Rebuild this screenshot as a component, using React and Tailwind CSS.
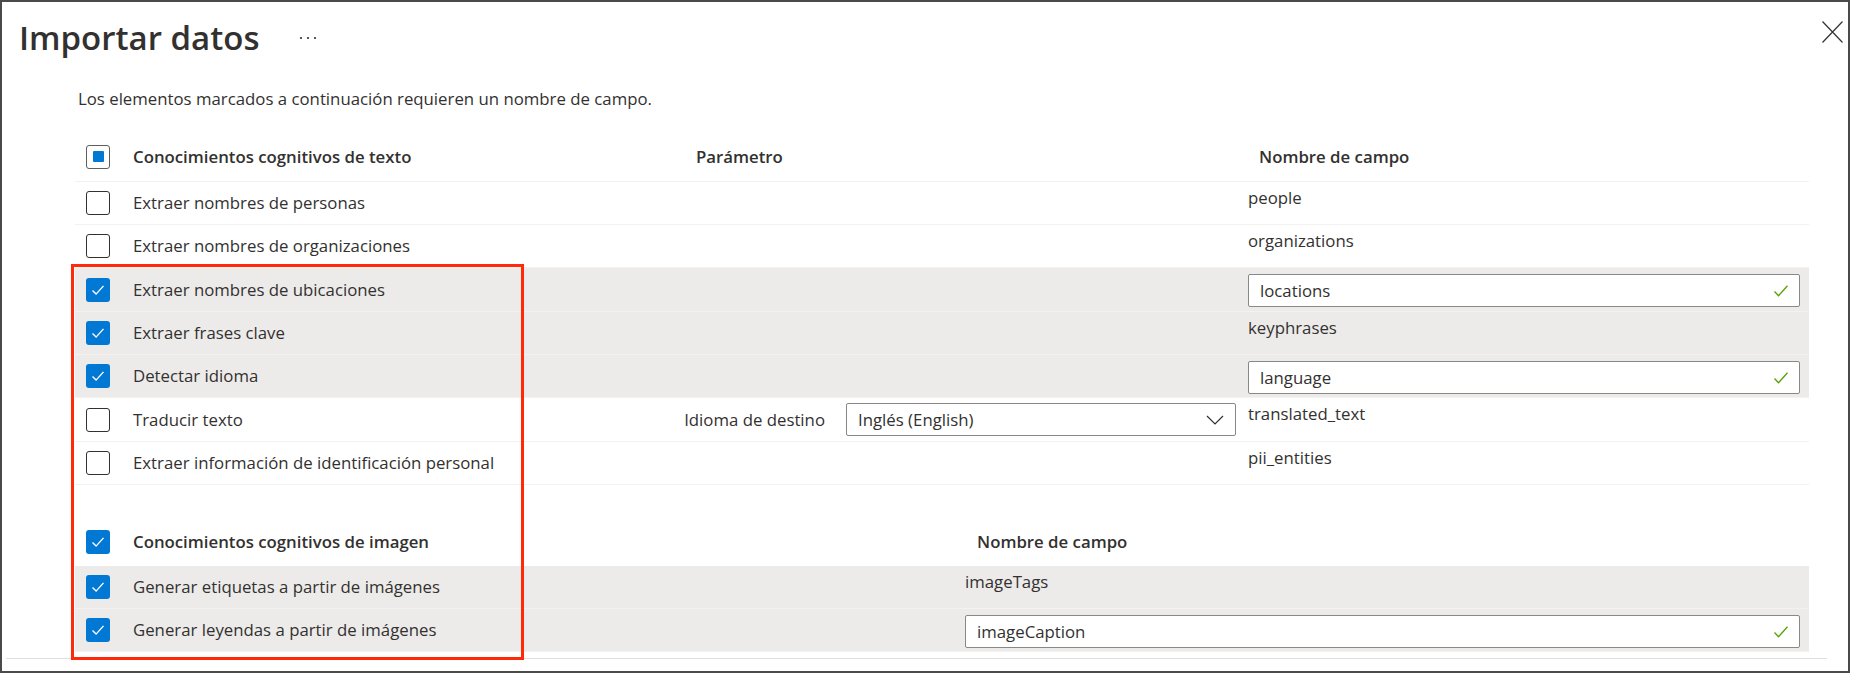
import React from 'react';

const font = { fontFamily: '"Open Sans", "Noto Sans", Arial, sans-serif' };

const textRows = [
  { label: 'Extraer nombres de personas', checked: false, value: 'people', h: 'h-[43px]' },
  { label: 'Extraer nombres de organizaciones', checked: false, value: 'organizations', h: 'h-[43px]' },
  { label: 'Extraer nombres de ubicaciones', checked: true, value: 'locations', input: true, h: 'h-[44px]' },
  { label: 'Extraer frases clave', checked: true, value: 'keyphrases', h: 'h-[43px]' },
  { label: 'Detectar idioma', checked: true, value: 'language', input: true, h: 'h-[43px]' },
  { label: 'Traducir texto', checked: false, value: 'translated_text', param: true, h: 'h-[44px]' },
  { label: 'Extraer información de identificación personal', checked: false, value: 'pii_entities', h: 'h-[43px]' },
];

const imageRows = [
  { label: 'Generar etiquetas a partir de imágenes', checked: true, value: 'imageTags' },
  { label: 'Generar leyendas a partir de imágenes', checked: true, value: 'imageCaption', input: true },
];

function Checkbox({ state }) {
  if (state === 'checked') {
    return (
      <div className="flex h-[24px] w-[24px] shrink-0 items-center justify-center rounded-[3px] bg-[#0078d4]">
        <svg width="24" height="24" viewBox="0 0 24 24" fill="none">
          <path d="M6.5 12.5l3.6 3.6 7.4-8.2" stroke="#fff" strokeWidth="1.4" />
        </svg>
      </div>
    );
  }
  if (state === 'mixed') {
    return (
      <div className="flex h-[24px] w-[24px] shrink-0 items-center justify-center rounded-[3px] border border-[#605e5c] bg-white">
        <div className="h-[11px] w-[11px] rounded-[1px] bg-[#0078d4]" />
      </div>
    );
  }
  return <div className="h-[24px] w-[24px] shrink-0 rounded-[3px] border border-[#323130] bg-white" />;
}

function GreenCheck() {
  return (
    <svg width="16" height="16" viewBox="0 0 16 16" fill="none">
      <path d="M1.5 8.5l4 4.2 9-10" stroke="#57a300" strokeWidth="1.3" />
    </svg>
  );
}

function ValueCell({ row }) {
  if (row.input) {
    return (
      <div className="mt-[6px] flex h-[33px] w-full items-center justify-between rounded-[2px] border border-[#8a8886] bg-white pl-[11px] pr-[10px]">
        <span>{row.value}</span>
        <GreenCheck />
      </div>
    );
  }
  return <div className="pt-[5px] leading-[22px]">{row.value}</div>;
}

function NameCell({ row, width }) {
  return (
    <div className={`flex items-center pl-[11px] ${width}`}>
      <Checkbox state={row.checked ? 'checked' : 'unchecked'} />
      <span className="ml-[23px] whitespace-nowrap">{row.label}</span>
    </div>
  );
}

function TextRow({ row }) {
  return (
    <div className={`flex border-b border-[#f3f2f1] ${row.h} ${row.checked ? 'bg-[#edebe9]' : ''}`}>
      <NameCell row={row} width="w-[609px]" />
      <div className="flex w-[564px] items-center justify-end gap-[21px] pr-[12px]">
        {row.param && (
          <>
            <span className="whitespace-nowrap">Idioma de destino</span>
            <div className="flex h-[33px] w-[390px] items-center justify-between rounded-[2px] border border-[#8a8886] bg-white pl-[11px] pr-[11px]">
              <span>Inglés (English)</span>
              <svg width="18" height="10" viewBox="0 0 18 10" fill="none">
                <path d="M1 1l8 8 8-8" stroke="#323130" strokeWidth="1.2" />
              </svg>
            </div>
          </>
        )}
      </div>
      <div className="flex flex-1 items-start pr-[9px]">
        <ValueCell row={row} />
      </div>
    </div>
  );
}

function ImageRow({ row }) {
  return (
    <div className="flex h-[43px] border-b border-[#f3f2f1] bg-[#edebe9]">
      <NameCell row={row} width="w-[890px]" />
      <div className="flex flex-1 items-start pr-[9px]">
        <ValueCell row={row} />
      </div>
    </div>
  );
}

export default function App() {
  return (
    <div
      className="relative flex h-screen w-full flex-col overflow-hidden border-2 border-[#4a4a4a] bg-white text-[16.8px] text-[#323130]"
      style={font}
    >
      <div className="flex items-start justify-between pl-[17px] pr-[5px] pt-[14px]">
        <div className="flex items-center">
          <h1 className="text-[33px] font-semibold leading-[44px]">Importar datos</h1>
          <svg className="ml-[40px]" width="18" height="4" viewBox="0 0 18 4" fill="#323130">
            <circle cx="2" cy="2" r="1.1" />
            <circle cx="9" cy="2" r="1.1" />
            <circle cx="16" cy="2" r="1.1" />
          </svg>
        </div>
        <svg className="mt-[5px]" width="21" height="22" viewBox="0 0 21 22" fill="none">
          <path d="M0.5 0.5l20 21M20.5 0.5l-20 21" stroke="#323130" strokeWidth="1.2" />
        </svg>
      </div>

      <div className="pl-[73px] pr-[39px]">
        <p className="ml-[3px] mt-[28px] leading-[22px]">
          Los elementos marcados a continuación requieren un nombre de campo.
        </p>

        <div className="mt-[22px] flex h-[50px] items-center border-b border-[#f3f2f1] font-semibold">
          <div className="flex w-[609px] items-center pl-[11px]">
            <Checkbox state="mixed" />
            <span className="ml-[23px]">Conocimientos cognitivos de texto</span>
          </div>
          <div className="w-[564px] pl-[12px]">Parámetro</div>
          <div className="flex-1 pl-[11px]">Nombre de campo</div>
        </div>

        {textRows.map((row) => (
          <TextRow key={row.label} row={row} />
        ))}

        <div className="mt-[33px] flex h-[48px] items-center font-semibold">
          <div className="flex w-[890px] items-center pl-[11px]">
            <Checkbox state="checked" />
            <span className="ml-[23px]">Conocimientos cognitivos de imagen</span>
          </div>
          <div className="flex-1 pl-[12px]">Nombre de campo</div>
        </div>

        {imageRows.map((row) => (
          <ImageRow key={row.label} row={row} />
        ))}
      </div>

      <div className="ml-[4px] mr-[21px] mt-[6px] border-t border-[#e1dfdd]" />

      <div className="pointer-events-none absolute left-[69px] top-[262px] h-[396px] w-[453px] border-[3px] border-[#ff2a0a]" />
    </div>
  );
}
